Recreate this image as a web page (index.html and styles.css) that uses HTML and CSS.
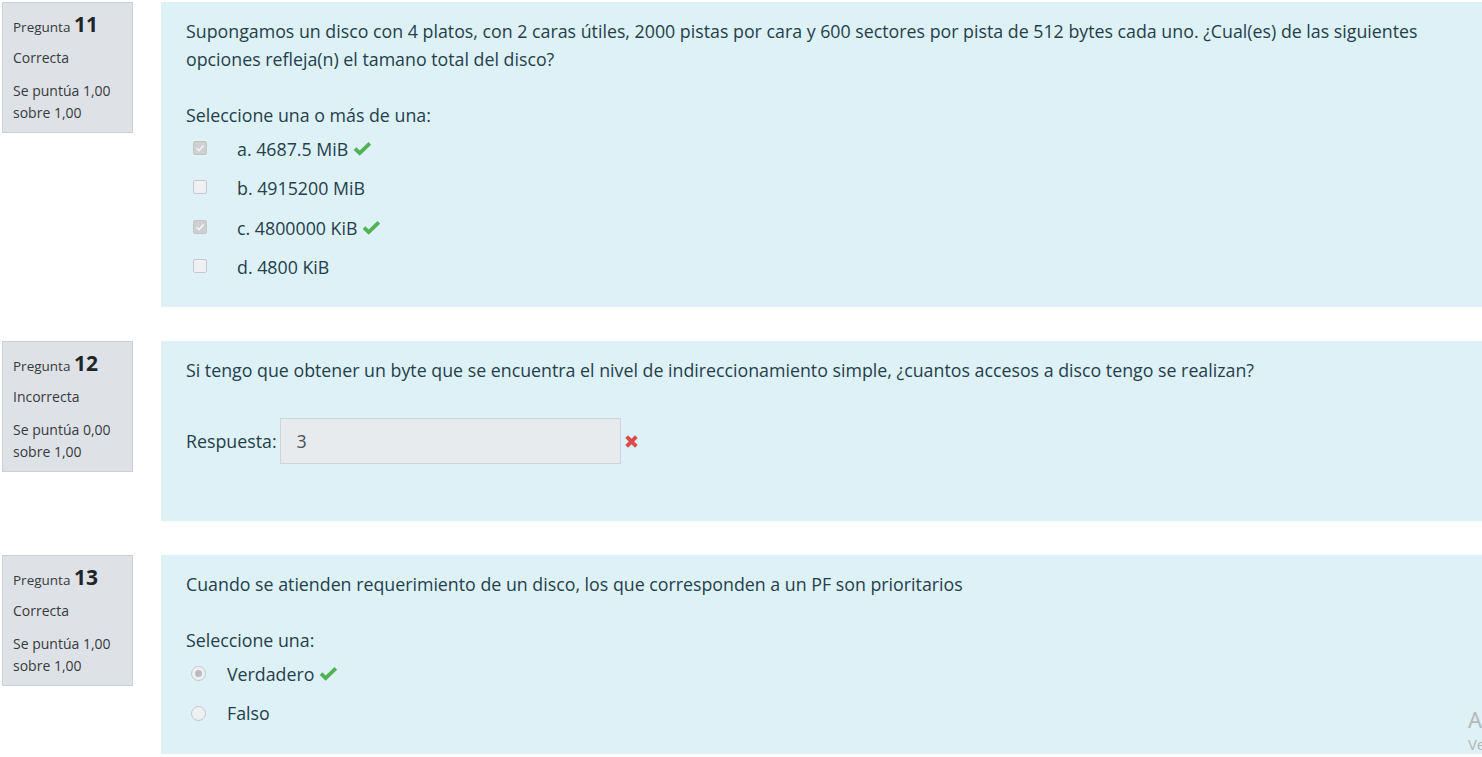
FILE: index.html
```html
<!DOCTYPE html>
<html lang="es">
<head>
<meta charset="utf-8">
<title>Revisión del intento</title>
<link rel="stylesheet" href="styles.css">
</head>
<body>
<div class="page">
  <div class="que">
    <div class="info">
      <h3 class="no">Pregunta <span class="qno">11</span></h3>
      <div class="state">Correcta</div>
      <div class="grade">Se puntúa 1,00 sobre 1,00</div>
    </div>
    <div class="content q11">
      <div class="qtext">Supongamos un disco con 4 platos, con 2 caras útiles, 2000 pistas por cara y 600 sectores por pista de 512 bytes cada uno. ¿Cual(es) de las siguientes opciones refleja(n) el tamano total del disco?</div>
      <div class="prompt">Seleccione una o más de una:</div>
      <div class="answer">
        <div class="opt"><span class="cb checked"><svg viewBox="0 0 14 14" width="14" height="14"><path d="M3.5 7.2 L6 9.6 L10.6 4.4" fill="none" stroke="#f2f2f2" stroke-width="1.6"/></svg></span><span class="lbl">a. 4687.5 MiB</span><svg class="ok" viewBox="0 0 20 16" width="19" height="15"><path d="M2 8.2 L7 13 L17.8 2.6" fill="none" stroke="#52b255" stroke-width="4"/></svg></div>
        <div class="opt"><span class="cb"></span><span class="lbl">b. 4915200 MiB</span></div>
        <div class="opt"><span class="cb checked"><svg viewBox="0 0 14 14" width="14" height="14"><path d="M3.5 7.2 L6 9.6 L10.6 4.4" fill="none" stroke="#f2f2f2" stroke-width="1.6"/></svg></span><span class="lbl">c. 4800000 KiB</span><svg class="ok" viewBox="0 0 20 16" width="19" height="15"><path d="M2 8.2 L7 13 L17.8 2.6" fill="none" stroke="#52b255" stroke-width="4"/></svg></div>
        <div class="opt"><span class="cb"></span><span class="lbl">d. 4800 KiB</span></div>
      </div>
    </div>
  </div>

  <div class="que">
    <div class="info">
      <h3 class="no">Pregunta <span class="qno">12</span></h3>
      <div class="state">Incorrecta</div>
      <div class="grade">Se puntúa 0,00 sobre 1,00</div>
    </div>
    <div class="content q12">
      <div class="qtext">Si tengo que obtener un byte que se encuentra el nivel de indireccionamiento simple, ¿cuantos accesos a disco tengo se realizan?</div>
      <div class="ablock">
        <label class="rlabel">Respuesta:</label>
        <span class="field">3</span>
        <svg class="bad" viewBox="0 0 14 14" width="15" height="15"><path d="M2.5 2.5 L11.5 11.5 M11.5 2.5 L2.5 11.5" fill="none" stroke="#dc4d49" stroke-width="3.6"/></svg>
      </div>
    </div>
  </div>

  <div class="que">
    <div class="info">
      <h3 class="no">Pregunta <span class="qno">13</span></h3>
      <div class="state">Correcta</div>
      <div class="grade">Se puntúa 1,00 sobre 1,00</div>
    </div>
    <div class="content q13">
      <div class="qtext">Cuando se atienden requerimiento de un disco, los que corresponden a un PF son prioritarios</div>
      <div class="prompt">Seleccione una:</div>
      <div class="answer">
        <div class="opt ropt"><span class="rb checked"></span><span class="lbl">Verdadero</span><svg class="ok" viewBox="0 0 20 16" width="19" height="15"><path d="M2 8.2 L7 13 L17.8 2.6" fill="none" stroke="#52b255" stroke-width="4"/></svg></div>
        <div class="opt ropt"><span class="rb"></span><span class="lbl">Falso</span></div>
      </div>
    </div>
  </div>
</div>
<div class="watermark">
  <div class="wm1">Activar Windows</div>
  <div class="wm2">Ve a Configuración para activar Windows.</div>
</div>
</body>
</html>
```

FILE: styles.css
```css
html, body {
  margin: 0;
  padding: 0;
  background: #ffffff;
  overflow: hidden;
}
body {
  font-family: "Open Sans", "Noto Sans", sans-serif;
  font-size: 17.8px;
  color: #243f4b;
}
.page {
  width: 1520px;
  padding: 2px 0 0 2px;
}
.que {
  display: flex;
  align-items: flex-start;
  margin-bottom: 34px;
}
.info {
  flex: none;
  background: #dee2e6;
  border: 1px solid #cbd0d5;
  padding: 7px 0 9px 10px;
  box-sizing: border-box;
  width: 131px;
  height: 131px;
  color: #373a3c;
  font-size: 14px;
}
.no {
  margin: 0;
  font-weight: normal;
  font-size: 13.5px;
  line-height: 28px;
}
.qno {
  font-size: 21px;
  font-weight: bold;
  color: #212529;
}
.state {
  line-height: 22px;
  margin-top: 6px;
}
.grade {
  line-height: 22px;
  margin-top: 11px;
  width: 112px;
}
.content {
  flex: 1;
  margin-left: 28px;
  background: #def1f7;
  padding: 15px 25px 0 25px;
  line-height: 28px;
}
.q11 { height: 290px; }
.q12 { height: 165px; }
.q13 { height: 184px; }
.qtext {
  max-width: 1262px;
  margin-bottom: 28px;
}
.prompt {
  margin-bottom: 0;
}
.opt {
  display: flex;
  align-items: center;
  height: 39.5px;
  padding-left: 7px;
}
.cb {
  width: 14px;
  height: 14px;
  box-sizing: border-box;
  border: 1px solid #c6c9cc;
  border-radius: 2px;
  background: #eef0f2;
  display: flex;
  margin-top: -2px;
}
.cb.checked {
  background: #cdcfd1;
  border-color: #c3c5c7;
}
.cb svg { display: block; margin: -1px; }
.lbl {
  margin-left: 30px;
}
.ok {
  margin-left: 5px;
}
.ropt { padding-left: 5px; }
.ropt .lbl { margin-left: 21px; }
.rb {
  width: 15px;
  height: 15px;
  box-sizing: border-box;
  border: 1px solid #c4c7ca;
  border-radius: 50%;
  background: #eef0f2;
  position: relative;
  margin-top: 0;
}
.rb.checked::after {
  content: "";
  position: absolute;
  left: 3px;
  top: 3px;
  width: 7px;
  height: 7px;
  border-radius: 50%;
  background: #b9bcbf;
}
.ablock {
  display: flex;
  align-items: center;
  margin-top: 34px;
}
.rlabel {
  margin-right: 3px;
}
.field {
  width: 341px;
  height: 46px;
  box-sizing: border-box;
  background: #e8ebee;
  border: 1px solid #ced4da;
  padding: 0 16px;
  line-height: 44px;
  color: #495057;
}
.bad {
  margin-left: 3px;
}
.watermark {
  position: absolute;
  left: 1468px;
  top: 704px;
  color: #b4b8ba;
  white-space: nowrap;
  font-family: "Noto Sans", sans-serif;
}
.wm1 { font-size: 22px; line-height: 30px; }
.wm2 { font-size: 15px; line-height: 20px; }
```
